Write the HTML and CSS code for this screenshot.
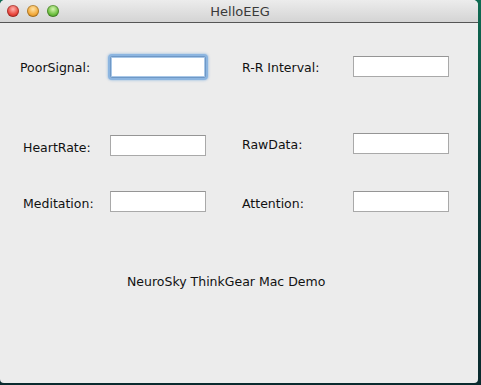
FILE: index.html
```html
<!DOCTYPE html>
<html>
<head>
<meta charset="utf-8">
<link rel="stylesheet" href="styles.css">
</head>
<body>
<div class="window">
  <div class="titlebar">
    <div class="lights">
      <span class="light red"></span>
      <span class="light yellow"></span>
      <span class="light green"></span>
    </div>
    <div class="title">HelloEEG</div>
  </div>
  <div class="content">
    <div class="row row1">
      <div class="cell left"><span class="label l-poor">PoorSignal:</span><span class="field focused"></span></div>
      <div class="cell right"><span class="label">R-R Interval:</span><span class="field up1"></span></div>
    </div>
    <div class="row row2">
      <div class="cell left"><span class="label l-ind">HeartRate:</span><span class="field"></span></div>
      <div class="cell right"><span class="label">RawData:</span><span class="field up2"></span></div>
    </div>
    <div class="row row3">
      <div class="cell left"><span class="label l-ind">Meditation:</span><span class="field"></span></div>
      <div class="cell right"><span class="label">Attention:</span><span class="field"></span></div>
    </div>
    <div class="footer">NeuroSky ThinkGear Mac Demo</div>
  </div>
</div>
</body>
</html>
```
FILE: styles.css
```css
html, body {
  margin: 0;
  padding: 0;
}
body {
  width: 481px;
  height: 385px;
  background: linear-gradient(#0f6b52, #0b3d3a 40%, #0a2a2e);
  font-family: "DejaVu Sans", Verdana, sans-serif;
  font-size: 12.5px;
  color: #111;
  overflow: hidden;
}
.window {
  width: 478px;
  height: 383px;
  background: #ececec;
  border-radius: 5px 5px 4px 4px;
  overflow: hidden;
  display: flex;
  flex-direction: column;
}
.titlebar {
  height: 22px;
  border-bottom: 1px solid #555;
  background: linear-gradient(#ececec, #d4d4d4);
  display: flex;
  align-items: center;
  position: relative;
}
.lights {
  display: flex;
  gap: 8px;
  padding-left: 7px;
}
.light {
  width: 12px;
  height: 12px;
  border-radius: 50%;
  box-shadow: inset 0 0 0 1px rgba(0,0,0,0.25);
}
.red { background: radial-gradient(circle at 50% 35%, #ffb3ae, #e8453c 55%, #b8231b); }
.yellow { background: radial-gradient(circle at 50% 35%, #ffe3a6, #f2a93a 55%, #c27a14); }
.green { background: radial-gradient(circle at 50% 35%, #d6f5b0, #6cbf3f 55%, #3f8a24); }
.title {
  position: absolute;
  left: 0;
  right: 0;
  top: 0;
  line-height: 23px;
  text-align: center;
  font-size: 13px;
  color: #3a3a3a;
  padding-left: 2px;
}
.content {
  flex: 1;
  display: flex;
  flex-direction: column;
}
.row {
  display: flex;
  height: 22px;
  align-items: center;
}
.row1 { margin-top: 33px; }
.row2 { margin-top: 56px; }
.row3 { margin-top: 34px; }
.cell {
  display: flex;
  align-items: center;
}
.left {
  width: 242px;
  padding-left: 20px;
  box-sizing: border-box;
}
.left .label { width: 90px; }
.left .label.l-ind { padding-left: 3px; width: 87px; }
.right .label { width: 111px; }
.label {
  display: inline-block;
  white-space: nowrap;
  line-height: 22px;
}
.row1 .label { margin-top: 2px; }
.row2 .left .label { margin-top: 5px; }
.row2 .right .label { margin-top: -1px; }
.row3 .label { margin-top: 6px; }
.field {
  display: inline-block;
  width: 96px;
  height: 21px;
  box-sizing: border-box;
  background: #fff;
  border: 1px solid #a9a9a9;
  border-top-color: #959595;
}
.field.up1 { margin-bottom: 2px; }
.field.up2 { margin-bottom: 4px; }
.field.focused {
  height: 22px;
  border: 1px solid #6f98c6;
  box-shadow: 0 0 0 2px #8cb5e0, 0 0 2px 3px rgba(140,181,224,0.5), inset 0 0 0 1px #a9c8e8;
  border-radius: 2px;
}
.footer {
  margin-top: 62px;
  padding-left: 127px;
  line-height: 16px;
}
```
